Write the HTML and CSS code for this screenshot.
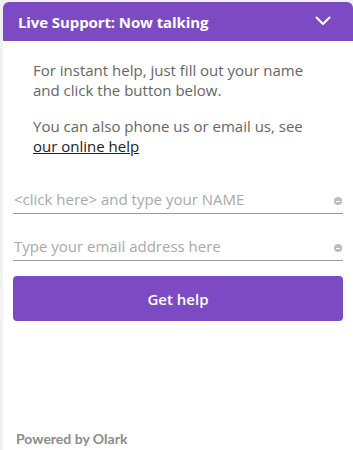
FILE: index.html
```html
<!DOCTYPE html>
<html>
<head>
<meta charset="utf-8">
<link rel="stylesheet" href="styles.css">
</head>
<body>
<div class="widget">
  <div class="header">
    <span class="title">Live Support: Now talking</span>
    <svg class="chev" width="16" height="10" viewBox="0 0 16 10"><path d="M1.5 1.5 L8 8 L14.5 1.5" fill="none" stroke="#fff" stroke-width="2" stroke-linecap="round" stroke-linejoin="round"/></svg>
  </div>
  <div class="body">
    <div class="intro">
      <p>For instant help, just fill out your name and click the button below.</p>
      <p>You can also phone us or email us, see <a href="#">our online help</a></p>
    </div>
    <div class="form">
      <div class="field">
        <span class="ph">&lt;click here&gt; and type your NAME</span>
        <span class="dot"></span>
      </div>
      <div class="field">
        <span class="ph">Type your email address here</span>
        <span class="dot"></span>
      </div>
      <button class="btn">Get help</button>
    </div>
    <div class="footer">Powered by Olark</div>
  </div>
</div>
</body>
</html>
```
FILE: styles.css
```css
html, body {
  margin: 0;
  padding: 0;
  height: 100%;
}
body {
  background: #f1f1f1;
  font-family: "Open Sans", "Noto Sans", sans-serif;
}
.widget {
  margin: 2px 0 0 3px;
  height: 448px;
  background: #fff;
  display: flex;
  flex-direction: column;
  border-radius: 6px 6px 0 0;
}
.header {
  height: 39px;
  flex: none;
  background: #7c4bc3;
  border-radius: 6px 6px 0 0;
  display: flex;
  align-items: center;
  justify-content: space-between;
  padding: 0 22px 0 15px;
}
.title {
  color: #fff;
  font-weight: 700;
  font-size: 15px;
  letter-spacing: -0.1px;
}
.chev {
  display: block;
  margin-top: -1px;
}
.body {
  flex: 1;
  display: flex;
  flex-direction: column;
  padding: 0 10px 0 10px;
}
.intro {
  padding: 19px 30px 0 20px;
}
.intro p {
  margin: 0 0 16px 0;
  font-size: 15px;
  line-height: 20px;
  color: #666;
}
.intro a {
  color: #222;
  text-decoration: underline;
}
.form {
  display: flex;
  flex-direction: column;
}
.field {
  height: 41px;
  box-sizing: content-box;
  border-bottom: 1px solid #9a9a9a;
  display: flex;
  align-items: flex-end;
  justify-content: space-between;
  padding-bottom: 0;
}
.field + .field {
  margin-top: 5px;
}
.ph {
  font-size: 15px;
  line-height: 20px;
  color: #a9a9a9;
  padding-left: 1px;
  margin-bottom: 4px;
}
.dot {
  flex: none;
  width: 8px;
  height: 8px;
  border-radius: 50%;
  background: #bdbdbd;
  margin: 0 1px 8px 0;
  position: relative;
}
.dot::after {
  content: "";
  position: absolute;
  left: 2px;
  top: 3.5px;
  width: 4px;
  height: 1px;
  background: #fff;
}
.btn {
  height: 45px;
  margin-top: 15px;
  border: none;
  border-radius: 4px;
  background: #7c4bc3;
  color: #fff;
  font-family: "Open Sans", "Noto Sans", sans-serif;
  font-weight: 600;
  font-size: 15px;
}
.footer {
  margin-top: auto;
  padding: 0 0 3px 3px;
  font-family: Lato, sans-serif;
  font-weight: 700;
  font-size: 14px;
  color: #8c8c8c;
  line-height: 16px;
}
```
